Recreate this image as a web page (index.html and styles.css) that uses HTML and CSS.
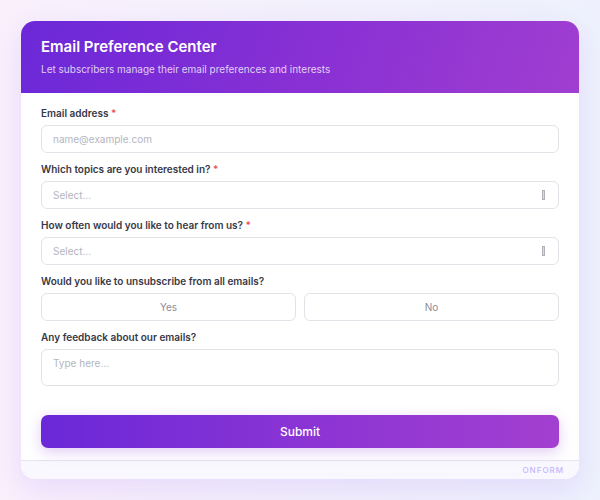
FILE: index.html
```html
<!DOCTYPE html>
<html lang="en">
<head>
    <meta charset="UTF-8">
    <meta name="viewport" content="width=device-width, initial-scale=1.0">
    <title>Email Preference Center</title>
    <link rel="stylesheet" href="styles.css">
</head>
<body>
    <div class="card">
        <div class="card-header">
            <h1 class="title">Email Preference Center</h1>
            <p class="subtitle">Let subscribers manage their email preferences and interests</p>
        </div>

        <form class="card-body">
            <div class="field">
                <label>Email address <span class="req">*</span></label>
                <div class="input"><span class="placeholder">name@example.com</span></div>
            </div>
            <div class="field">
                <label>Which topics are you interested in? <span class="req">*</span></label>
                <div class="input select">
                    <span class="placeholder">Select...</span>
                    <span class="caret"></span>
                </div>
            </div>
            <div class="field">
                <label>How often would you like to hear from us? <span class="req">*</span></label>
                <div class="input select">
                    <span class="placeholder">Select...</span>
                    <span class="caret"></span>
                </div>
            </div>
            <div class="field">
                <label>Would you like to unsubscribe from all emails?</label>
                <div class="choices">
                    <div class="choice">Yes</div>
                    <div class="choice">No</div>
                </div>
            </div>
            <div class="field">
                <label>Any feedback about our emails?</label>
                <div class="input textarea"><span class="placeholder">Type here...</span></div>
            </div>
            <div class="submit">Submit</div>
        </form>

        <div class="card-footer">ONFORM</div>
    </div>
</body>
</html>
```

FILE: styles.css
```css
* {
    box-sizing: border-box;
}
body {
    margin: 0;
    padding: 21px;
    font-family: "Inter", "Liberation Sans", sans-serif;
    background: linear-gradient(90deg, #f9f0fc 0%, #f3f0fc 50%, #eef1fd 100%);
    min-height: 500px;
}
.card {
    background-color: #fff;
    border-radius: 14px;
    overflow: hidden;
    box-shadow: 0 10px 30px rgba(124, 58, 237, 0.12);
}
.card-header {
    padding: 16px 20px 17px;
    background: linear-gradient(110deg, #6b28d8 0%, #8a31d4 55%, #a03ed0 100%);
    color: #fff;
}
.title {
    margin: 0;
    font-size: 15px;
    line-height: 20px;
    font-weight: 600;
}
.subtitle {
    margin: 5px 0 0;
    font-size: 10px;
    line-height: 14px;
    color: rgba(255, 255, 255, 0.78);
}
.card-body {
    padding: 13px 20px 12px;
    display: flex;
    flex-direction: column;
}
.field {
    margin-bottom: 9px;
}
.field label {
    display: block;
    font-size: 10px;
    line-height: 14px;
    font-weight: 600;
    color: #383846;
    margin-bottom: 5px;
}
.req {
    color: #f05252;
}
.input {
    height: 28px;
    border: 1.5px solid #e2e2e8;
    border-radius: 6px;
    padding: 0 11px;
    display: flex;
    align-items: center;
    font-size: 10px;
}
.placeholder {
    color: #b5b5c0;
}
.select {
    justify-content: space-between;
}
.caret {
    width: 3px;
    height: 10px;
    border: 1px solid #b0b0b8;
    background-color: #dcdce0;
    margin-right: 2px;
}
.textarea {
    height: 37px;
    align-items: flex-start;
    padding-top: 7px;
}
.choices {
    display: grid;
    grid-template-columns: 1fr 1fr;
    gap: 8px;
}
.choice {
    height: 28px;
    border: 1.5px solid #e2e2e8;
    border-radius: 6px;
    display: flex;
    align-items: center;
    justify-content: center;
    font-size: 10px;
    color: #8c8c98;
}
.submit {
    margin-top: 20px;
    height: 33px;
    border-radius: 7px;
    background: linear-gradient(90deg, #6a28d8 0%, #8a34d4 50%, #a33fd0 100%);
    box-shadow: 0 4px 14px rgba(139, 52, 212, 0.25);
    color: #fff;
    font-size: 12px;
    font-weight: 500;
    display: flex;
    align-items: center;
    justify-content: center;
}
.card-footer {
    border-top: 1px solid #e6e4ee;
    background-color: #f9f8fe;
    height: 19px;
    padding: 0 15px;
    display: flex;
    align-items: center;
    justify-content: flex-end;
    font-size: 8px;
    font-weight: 500;
    letter-spacing: 1px;
    color: #c4b5fd;
}
```
